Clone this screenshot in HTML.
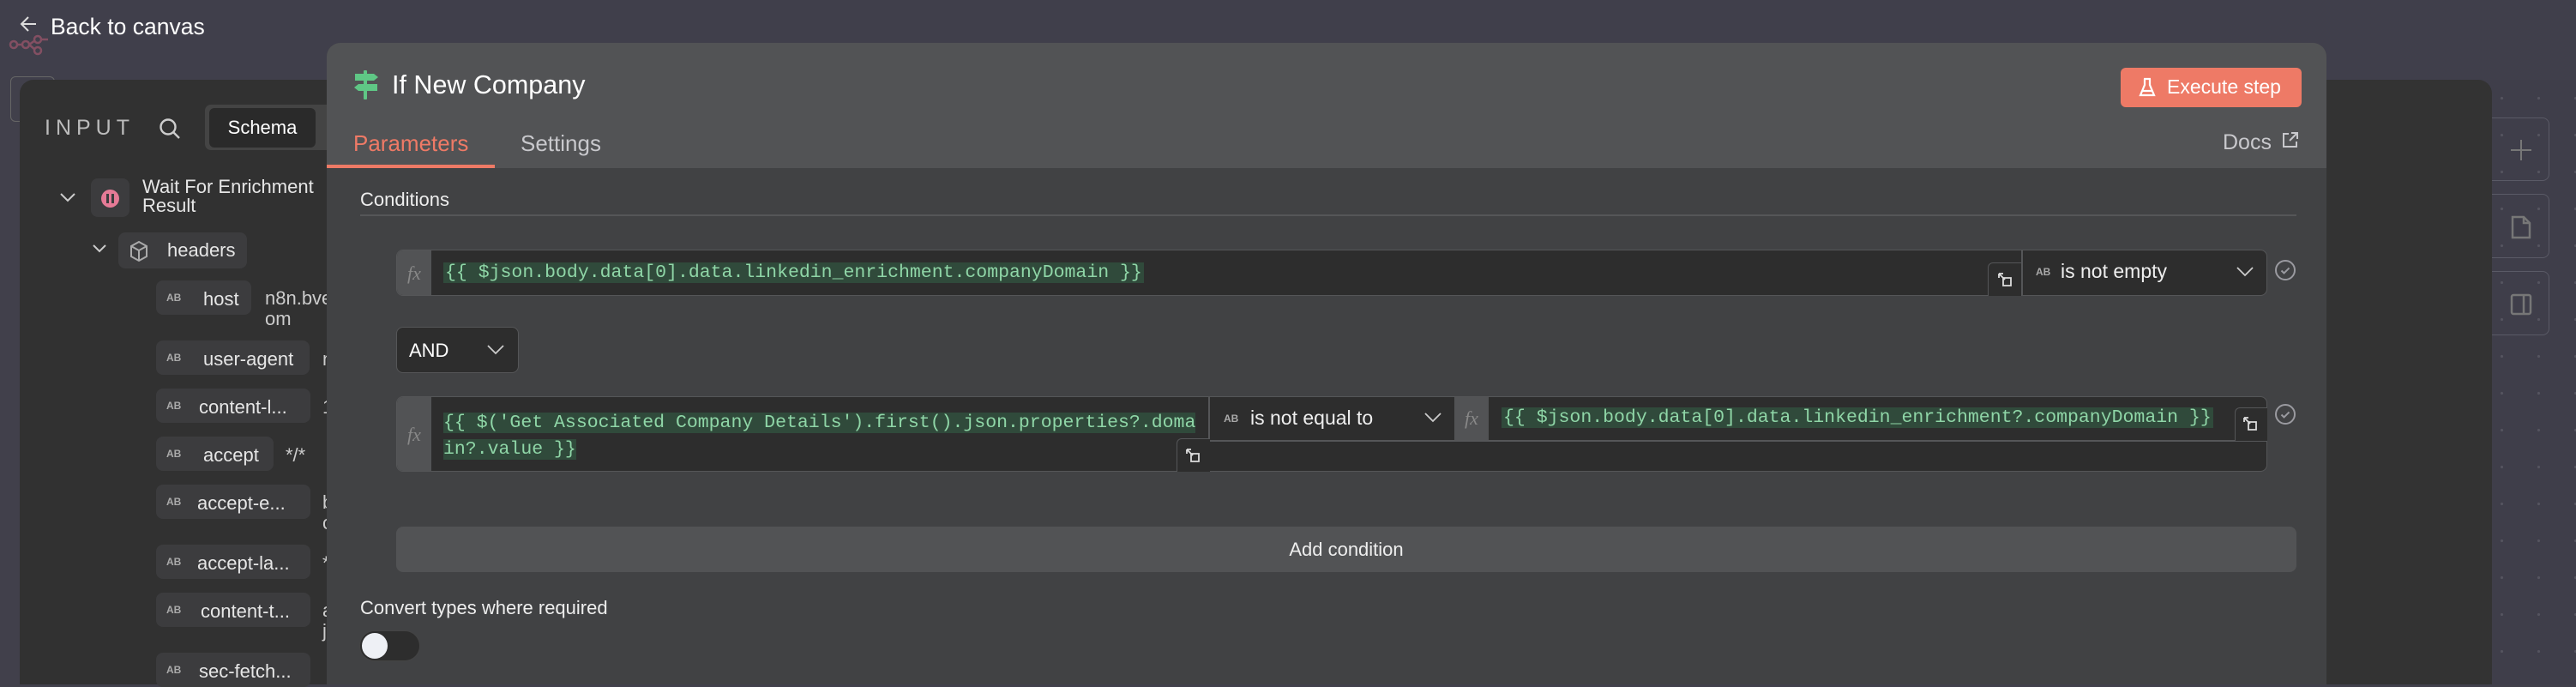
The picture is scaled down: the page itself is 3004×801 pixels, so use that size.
<!DOCTYPE html>
<html><head><meta charset="utf-8"><style>
*{box-sizing:border-box;margin:0;padding:0}
body{width:3004px;height:798px;overflow:hidden;background:#41404b;font-family:"Liberation Sans",sans-serif;position:relative;color:#e8e8e8}
.a{position:absolute}
.mono{font-family:"Liberation Mono",monospace}
.code{background:#304a3b;color:#8fd6a7;font-size:21.5px;line-height:24px}
.inp{background:#2d2d2d;border:1.5px solid #555658}
.fx{background:#525355;color:#888;font-family:"Liberation Serif",serif;font-style:italic;font-size:22px;display:flex;align-items:center;justify-content:center}
.pill{background:#3c3c3e;border-radius:8px;height:40px}
.ab{font-size:12px;font-weight:bold;color:#aaa;position:absolute;left:12px;top:13px}
.pl{position:absolute;left:55px;top:9px;font-size:22px;color:#e6e6e6}
.val{font-size:22px;color:#ccc}
.dots{background-image:radial-gradient(circle,#55545f 1.4px,transparent 1.8px);background-size:43px 43px;background-position:10px 0}
</style></head><body>
<div class="a" style="left:0;top:0;width:3004px;height:93px;background:#403f4b"></div>
<div class="a dots" style="left:2800px;top:93px;width:204px;height:705px;background-color:#3f3e4a"></div>
<!-- canvas right buttons -->
<div class="a" style="left:2880px;top:137px;width:93px;height:74px;border:1.5px solid #5a5a66;border-radius:8px"></div>
<div class="a" style="left:2880px;top:226px;width:93px;height:75px;border:1.5px solid #5a5a66;border-radius:8px"></div>
<div class="a" style="left:2880px;top:316px;width:93px;height:75px;border:1.5px solid #5a5a66;border-radius:8px"></div>
<svg class="a" style="left:2925px;top:160px" width="30" height="30" viewBox="0 0 30 30" stroke="#777" stroke-width="2" fill="none"><path d="M15 3v24M3 15h24"/></svg>
<svg class="a" style="left:2926px;top:250px" width="28" height="30" viewBox="0 0 28 30" stroke="#777" stroke-width="2.5" fill="none"><path d="M4 3h13l7 7v17H4z M17 3v7h7"/></svg>
<svg class="a" style="left:2925px;top:340px" width="30" height="30" viewBox="0 0 30 30" stroke="#777" stroke-width="2.5" fill="none"><rect x="4" y="4" width="22" height="22" rx="2"/><path d="M18 4v22"/></svg>
<!-- back to canvas -->
<svg class="a" style="left:10px;top:40px;opacity:.5" width="50" height="25" viewBox="0 0 50 25" stroke="#c5607a" stroke-width="2.5" fill="none"><circle cx="6" cy="12" r="4"/><circle cx="20" cy="12" r="4"/><circle cx="34" cy="6" r="4"/><circle cx="34" cy="19" r="4"/><path d="M10 12h6M24 12l7-5M24 12l7 6M38 6h8"/></svg>
<svg class="a" style="left:22px;top:17px" width="24" height="22" viewBox="0 0 24 22" stroke="#ddd" stroke-width="2" fill="none"><path d="M20 11H4M11 3l-8 8 8 8"/></svg>
<div class="a" style="left:59px;top:16px;font-size:26.5px;color:#fff">Back to canvas</div>
<div class="a" style="left:12px;top:89px;width:52px;height:53px;border:1.5px solid #666;border-radius:6px"></div>
<!-- right dark panel -->
<div class="a" style="left:2600px;top:93px;width:306px;height:705px;background:#333;border-radius:0 16px 0 0"></div>
<!-- left input panel -->
<div class="a" style="left:23px;top:93px;width:400px;height:705px;background:#313131;border-radius:16px 0 0 0"></div>
<div class="a" style="left:52px;top:135px;font-size:25px;letter-spacing:6px;color:#bbb">INPUT</div>
<svg class="a" style="left:184px;top:136px" width="28" height="28" viewBox="0 0 28 28" stroke="#ccc" stroke-width="2.4" fill="none"><circle cx="12" cy="12" r="8.5"/><path d="M18 18l7 7"/></svg>
<div class="a" style="left:239px;top:122px;width:160px;height:53px;background:#444;border-radius:7px"></div>
<div class="a" style="left:244px;top:126px;width:124px;height:46px;background:#2a2a2a;border-radius:6px;font-size:22px;color:#fff;text-align:center;line-height:46px">Schema</div>
<svg class="a" style="left:69px;top:223px" width="20" height="14" viewBox="0 0 20 14" stroke="#ccc" stroke-width="2" fill="none"><path d="M2 3l8 8 8-8"/></svg>
<div class="a" style="left:106px;top:208px;width:45px;height:45px;background:#3c3c3e;border-radius:8px"></div>
<div class="a" style="left:118px;top:221px;width:21px;height:21px;background:#e57a96;border-radius:50%"></div>
<div class="a" style="left:124px;top:226px;width:3px;height:11px;background:#3c3c3e"></div>
<div class="a" style="left:130px;top:226px;width:3px;height:11px;background:#3c3c3e"></div>
<div class="a" style="left:166px;top:207px;font-size:22px;line-height:22px;color:#e6e6e6">Wait For Enrichment<br>Result</div>
<svg class="a" style="left:107px;top:284px" width="18" height="12" viewBox="0 0 18 12" stroke="#ccc" stroke-width="2" fill="none"><path d="M2 2l7 7 7-7"/></svg>
<div class="a pill" style="left:138px;top:271px;width:150px;height:42px"></div>
<svg class="a" style="left:150px;top:280px" width="24" height="26" viewBox="0 0 24 26" stroke="#aaa" stroke-width="2" fill="none"><path d="M12 2l9 5v12l-9 5-9-5V7zM3 7l9 5 9-5M12 12v12"/></svg>
<div class="a" style="left:195px;top:279px;font-size:22px;color:#e6e6e6">headers</div>
<div class="a pill" style="left:182px;top:327px;width:111px"><span class="ab">AB</span><span class="pl">host</span></div>
<div class="a val" style="left:309px;top:336px;line-height:24px">n8n.bve<br>om</div>
<div class="a pill" style="left:182px;top:397px;width:179px"><span class="ab">AB</span><span class="pl">user-agent</span></div>
<div class="a val" style="left:376px;top:406px">n</div>
<div class="a pill" style="left:182px;top:453px;width:180px"><span class="ab">AB</span><span class="pl" style="left:50px">content-l...</span></div>
<div class="a val" style="left:376px;top:462px">1</div>
<div class="a pill" style="left:182px;top:509px;width:137px"><span class="ab">AB</span><span class="pl">accept</span></div>
<div class="a val" style="left:333px;top:518px">*/*</div>
<div class="a pill" style="left:182px;top:565px;width:180px"><span class="ab">AB</span><span class="pl" style="left:48px">accept-e...</span></div>
<div class="a val" style="left:376px;top:574px;line-height:24px">b<br>c</div>
<div class="a pill" style="left:182px;top:635px;width:180px"><span class="ab">AB</span><span class="pl" style="left:48px">accept-la...</span></div>
<div class="a val" style="left:376px;top:644px">*</div>
<div class="a pill" style="left:182px;top:691px;width:180px"><span class="ab">AB</span><span class="pl" style="left:52px">content-t...</span></div>
<div class="a val" style="left:376px;top:700px;line-height:24px">a<br>j</div>
<div class="a pill" style="left:182px;top:761px;width:180px"><span class="ab">AB</span><span class="pl" style="left:50px">sec-fetch...</span></div>
<!-- main panel -->
<div class="a" style="left:381px;top:50px;width:2332px;height:748px;background:#414244;border-radius:16px 16px 0 0;overflow:hidden">
 <div class="a" style="left:0;top:0;width:2332px;height:146px;background:#525355"></div>
</div>
<svg class="a" style="left:410px;top:82px" width="34" height="34" viewBox="0 0 34 34"><rect x="14" y="0" width="4" height="34" rx="1" fill="#5fc785"/><path d="M4 4h22l5 4-5 4H4z" fill="#5fc785"/><path d="M30 16H8l-5 4 5 4h22z" fill="#5fc785"/></svg>
<div class="a" style="left:457px;top:82px;font-size:30.5px;color:#fff">If New Company</div>
<div class="a" style="left:2473px;top:79px;width:211px;height:46px;background:#ee7a66;border-radius:6px"></div>
<svg class="a" style="left:2494px;top:90px" width="20" height="24" viewBox="0 0 20 24" stroke="#fff" stroke-width="2.2" fill="none"><path d="M6 2h8M7 2v7L2 21h16L13 9V2M4 16h12"/></svg>
<div class="a" style="left:2527px;top:88px;font-size:23px;color:#fff">Execute step</div>
<div class="a" style="left:412px;top:152px;font-size:26px;color:#ee7a66">Parameters</div>
<div class="a" style="left:381px;top:192px;width:196px;height:4px;background:#ee7a66"></div>
<div class="a" style="left:607px;top:152px;font-size:26px;color:#c8c8cc">Settings</div>
<div class="a" style="left:2592px;top:152px;font-size:25px;color:#c8c8cc">Docs</div>
<svg class="a" style="left:2661px;top:153px" width="20" height="20" viewBox="0 0 20 20" stroke="#c8c8cc" stroke-width="2" fill="none"><path d="M8 3H2v15h15v-6M11 2h7v7M18 2l-9 9"/></svg>
<div class="a" style="left:420px;top:220px;font-size:22px;color:#eee">Conditions</div>
<div class="a" style="left:420px;top:250px;width:2258px;height:2px;background:#555658"></div>
<!-- row 1 -->
<div class="a inp" style="left:462px;top:291px;width:2182px;height:54px;border-radius:8px;overflow:hidden">
 <div class="a fx" style="left:0;top:0;width:40px;height:54px">fx</div>
</div>
<div class="a mono code" style="left:517px;top:306px;padding:0 2px">{{ $json.body.data[0].data.linkedin_enrichment.companyDomain }}</div>
<div class="a inp" style="left:2318px;top:306px;width:40px;height:39px;border-radius:6px 0 0 0;border-bottom:none"></div>
<svg class="a" style="left:2328px;top:316px" width="20" height="20" viewBox="0 0 20 20" stroke="#ddd" stroke-width="1.8" fill="none"><path d="M3 3l7 7M3 3h5M3 3v5M8 8h9v9H8z"/></svg>
<div class="a" style="left:2357px;top:292px;width:2px;height:52px;background:#555658"></div>
<div class="a" style="left:2374px;top:310px;font-size:12px;font-weight:bold;color:#aaa">AB</div>
<div class="a" style="left:2403px;top:303px;font-size:23px;color:#eee">is not empty</div>
<svg class="a" style="left:2607px;top:310px" width="22" height="14" viewBox="0 0 22 14" stroke="#ccc" stroke-width="1.8" fill="none"><path d="M2 2l9 9 9-9"/></svg>
<svg class="a" style="left:2652px;top:302px" width="26" height="26" viewBox="0 0 26 26" stroke="#9a9aa0" stroke-width="2" fill="none"><circle cx="13" cy="13" r="11"/><path d="M8.5 13.5l3 3 6-6"/></svg>
<!-- AND -->
<div class="a inp" style="left:462px;top:381px;width:143px;height:54px;border-radius:8px"></div>
<div class="a" style="left:477px;top:396px;font-size:22px;color:#fff">AND</div>
<svg class="a" style="left:567px;top:401px" width="22" height="14" viewBox="0 0 22 14" stroke="#ccc" stroke-width="1.8" fill="none"><path d="M2 2l9 9 9-9"/></svg>
<!-- row 2 -->
<div class="a inp" style="left:462px;top:462px;width:2182px;height:88px;border-radius:8px;overflow:hidden">
 <div class="a fx" style="left:0;top:0;width:40px;height:88px">fx</div>
</div>
<div class="a" style="left:1410px;top:513px;width:1234px;height:2px;background:#555658"></div>
<div class="a" style="left:1409px;top:463px;width:2px;height:86px;background:#555658"></div>
<div class="a mono code" style="left:517px;top:478px;background:none;line-height:31px"><span style="background:#304a3b">{{ $('Get Associated Company Details').first().json.properties?.doma</span><br><span style="background:#304a3b">in?.value }}</span></div>
<div class="a inp" style="left:1372px;top:511px;width:39px;height:39px;border-radius:6px 0 0 0;border-bottom:none;border-right:none"></div>
<svg class="a" style="left:1381px;top:521px" width="20" height="20" viewBox="0 0 20 20" stroke="#ddd" stroke-width="1.8" fill="none"><path d="M3 3l7 7M3 3h5M3 3v5M8 8h9v9H8z"/></svg>
<div class="a" style="left:1427px;top:481px;font-size:12px;font-weight:bold;color:#aaa">AB</div>
<div class="a" style="left:1458px;top:474px;font-size:23px;color:#eee">is not equal to</div>
<svg class="a" style="left:1660px;top:480px" width="22" height="14" viewBox="0 0 22 14" stroke="#ccc" stroke-width="1.8" fill="none"><path d="M2 2l9 9 9-9"/></svg>
<div class="a fx" style="left:1696px;top:463px;width:40px;height:50px">fx</div>
<div class="a mono code" style="left:1751px;top:475px;padding:0 2px">{{ $json.body.data[0].data.linkedin_enrichment?.companyDomain }}</div>
<div class="a inp" style="left:2606px;top:475px;width:38px;height:39px;border-radius:6px 0 0 0;border-bottom:none;border-right:none"></div>
<svg class="a" style="left:2614px;top:484px" width="20" height="20" viewBox="0 0 20 20" stroke="#ddd" stroke-width="1.8" fill="none"><path d="M3 3l7 7M3 3h5M3 3v5M8 8h9v9H8z"/></svg>
<svg class="a" style="left:2652px;top:470px" width="26" height="26" viewBox="0 0 26 26" stroke="#9a9aa0" stroke-width="2" fill="none"><circle cx="13" cy="13" r="11"/><path d="M8.5 13.5l3 3 6-6"/></svg>
<!-- add condition -->
<div class="a" style="left:462px;top:614px;width:2216px;height:53px;background:#525355;border-radius:8px;text-align:center;line-height:53px;font-size:22px;color:#eee">Add condition</div>
<div class="a" style="left:420px;top:696px;font-size:22px;color:#eee">Convert types where required</div>
<div class="a" style="left:419px;top:735px;width:71px;height:36px;background:#2d2d2d;border:1.5px solid #444;border-radius:18px"></div>
<div class="a" style="left:422px;top:738px;width:30px;height:30px;background:#eef0f5;border-radius:50%"></div>
</body></html>
